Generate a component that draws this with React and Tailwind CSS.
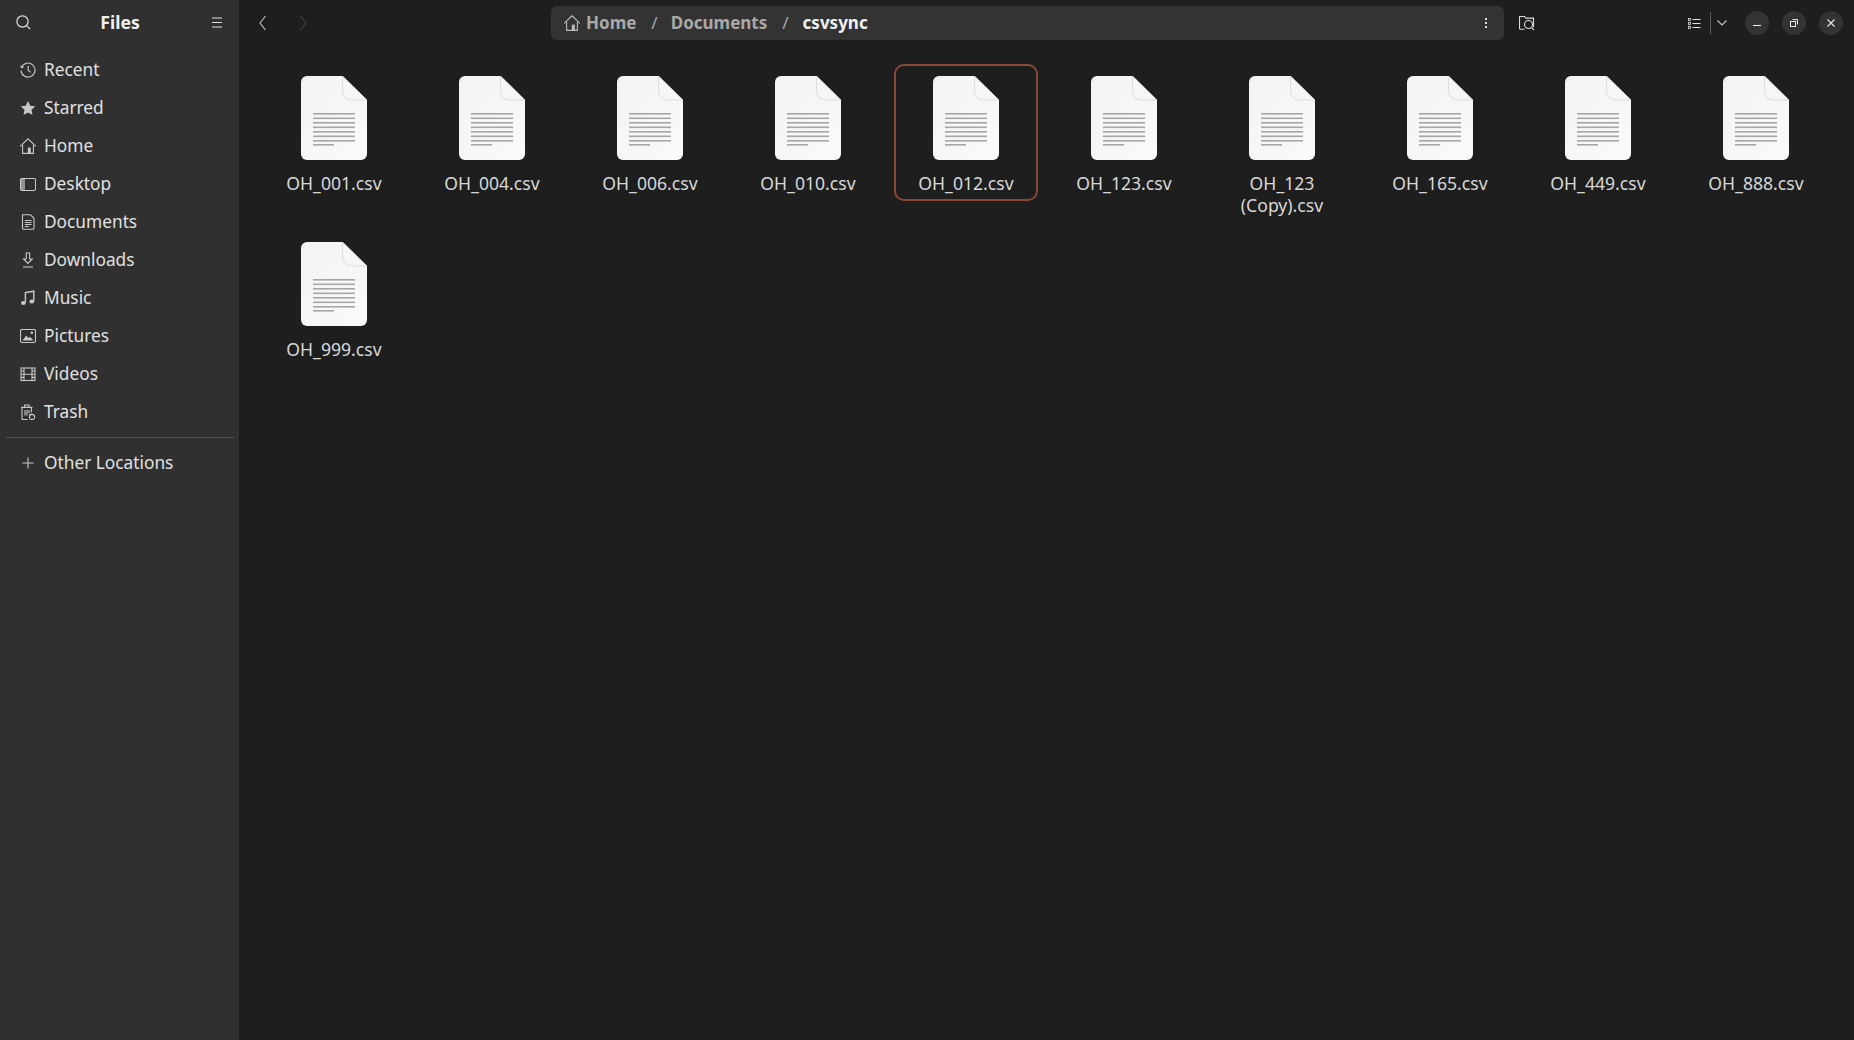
import React from "react";

const places = [
  { name: "Recent", icon: "recent" },
  { name: "Starred", icon: "star" },
  { name: "Home", icon: "home" },
  { name: "Desktop", icon: "desktop" },
  { name: "Documents", icon: "doc" },
  { name: "Downloads", icon: "download" },
  { name: "Music", icon: "music" },
  { name: "Pictures", icon: "pictures" },
  { name: "Videos", icon: "videos" },
  { name: "Trash", icon: "trash" },
];

const files = [
  "OH_001.csv",
  "OH_004.csv",
  "OH_006.csv",
  "OH_010.csv",
  "OH_012.csv",
  "OH_123.csv",
  "OH_123 (Copy).csv",
  "OH_165.csv",
  "OH_449.csv",
  "OH_888.csv",
  "OH_999.csv",
];

const PlaceIcon = ({ type }) => {
  const stroke = { fill: "none", stroke: "currentColor", strokeWidth: 1.1 };
  return (
    <svg width="16" height="16" viewBox="0 0 16 16" className="shrink-0 text-[#c8c8c8]">
      {type === "recent" && (
        <g {...stroke}>
          <path d="M1.6 5.2A7 7 0 1 1 1 8.4" />
          <path d="M8.2 4v4.4l2.6 2" />
          <path d="M.6 3.4l1 2.2 2.2-.7" />
        </g>
      )}
      {type === "star" && (
        <path fill="currentColor" d="M8 1l2.2 4.7 5.1.6-3.8 3.5 1 5.1L8 12.4l-4.5 2.5 1-5.1L.7 6.3l5.1-.6z" />
      )}
      {type === "home" && (
        <g {...stroke}>
          <path d="M0 8.400L8 .8l8 7.600" />
          <path d="M2.600 7v8.400h10.800V7" />
          <rect x="7.800" y="9.600" width="3" height="5.800" fill="currentColor" stroke="none" />
        </g>
      )}
      {type === "desktop" && (
        <g>
          <rect x=".5" y="2.500" width="15" height="12" rx="1.500" {...stroke} />
          <path fill="currentColor" opacity=".65" d="M2 2.500h3v12H2a1.500 1.500 0 0 1-1.500-1.500V4A1.500 1.500 0 0 1 2 2.500z" />
        </g>
      )}
      {type === "doc" && (
        <g {...stroke}>
          <path d="M2.500.8h8l3.500 3.500v9.700a1.300 1.300 0 0 1-1.300 1.300H3.800A1.300 1.300 0 0 1 2.500 14z" />
          <path d="M4.800 6.500h6.800M4.800 8.500h6.800M4.800 10.500h6.800M4.800 12.500h4" />
        </g>
      )}
      {type === "download" && (
        <g {...stroke}>
          <path d="M6.200 1h3.400v6h2.600L7.900 11.400 3.600 7h2.600z" />
          <path d="M3 15h10" />
        </g>
      )}
      {type === "music" && (
        <g>
          <path {...stroke} strokeWidth="1.400" d="M5.400 12.500V2.600l8.400-1.400v9.600" />
          <ellipse cx="3.400" cy="13" rx="2.400" ry="2" fill="currentColor" />
          <ellipse cx="11.800" cy="11.400" rx="2.400" ry="2" fill="currentColor" />
        </g>
      )}
      {type === "pictures" && (
        <g>
          <rect x=".5" y="1.500" width="15" height="13" rx="1.500" {...stroke} />
          <path fill="currentColor" d="M2.500 12.500l3.800-5 2.200 2.600 1.400-1.400 3.600 3.800z" />
          <circle cx="11.800" cy="4.800" r="1.300" fill="currentColor" />
        </g>
      )}
      {type === "videos" && (
        <g {...stroke}>
          <rect x="1" y="2" width="14" height="12.500" />
          <path d="M4 2v12.500M12 2v12.500M4 8.200h8M1 5h3M1 8.200h3M1 11.400h3M12 5h3M12 8.200h3M12 11.400h3" />
        </g>
      )}
      {type === "trash" && (
        <g {...stroke}>
          <path d="M1 3.400h11.400M4.600 3.200V1h4.400v2.200" />
          <path d="M2 3.600v11a1 1 0 0 0 1 1h4.600" />
          <path d="M11.400 3.600v5M5 6v5.500M7 6v5.500M9 6v3" />
          <circle cx="12" cy="13" r="2.600" />
          <path d="M9.600 9.800l1.200 1.200" />
        </g>
      )}
    </svg>
  );
};

const FileIcon = () => (
  <svg width="66" height="84" viewBox="0 0 66 84" className="shrink-0">
    <defs>
      <linearGradient id="page" x1="0" y1="0" x2="1" y2="1">
        <stop offset="0" stopColor="#f3f3f3" />
        <stop offset="1" stopColor="#fafafa" />
      </linearGradient>
    </defs>
    <path fill="url(#page)" d="M6 0h35.500L66 24v54a6 6 0 0 1-6 6H6a6 6 0 0 1-6-6V6a6 6 0 0 1 6-6z" />
    <path fill="#f7f6f4" stroke="#cfcdca" strokeWidth=".6" d="M41.500 0v15a9 9 0 0 0 9 9H66z" />
    {[37, 41.5, 46, 50.5, 55, 59.5, 64].map((y) => (
      <rect key={y} x="12" y={y} width="42" height="1.600" fill="#a6a6a6" />
    ))}
    <rect x="12" y="68" width="21" height="1.600" fill="#a6a6a6" />
  </svg>
);

const FileItem = ({ name, selected }) => (
  <div
    className={`w-[144px] self-start flex flex-col items-center pt-[10px] pb-[5px] rounded-[10px] border-2 ${
      selected ? "border-[#8a4a33]" : "border-transparent"
    }`}
  >
    <FileIcon />
    <div className="mt-3 w-full text-center text-[17.6px] leading-[22px] text-[#d8d8d8]">{name}</div>
  </div>
);

const Sidebar = () => (
  <aside className="w-[239px] shrink-0 bg-[#303030] text-[#e0e0e0]">
    <div className="h-[45px] flex items-center justify-between pl-4 pr-4">
      <svg width="15" height="15" viewBox="0 0 15 15" fill="none" stroke="#e0e0e0" strokeWidth="1.2">
        <circle cx="6.500" cy="6.500" r="5.600" />
        <path d="M10.600 10.600l3.600 3.400" />
      </svg>
      <span className="text-[17.6px] font-bold text-[#f0f0f0] -ml-[2px]">Files</span>
      <svg width="12" height="11" viewBox="0 0 12 11" stroke="#e0e0e0" strokeWidth="1.100">
        <path d="M1 1h10M1 5.500h10M1 10h10" />
      </svg>
    </div>
    <nav className="mt-[6px]">
      {places.map((p) => (
        <div key={p.name} className="h-[38px] flex items-center gap-2 pl-5">
          <PlaceIcon type={p.icon} />
          <span className="text-[17.3px]">{p.name}</span>
        </div>
      ))}
    </nav>
    <div className="ml-[6px] mr-[5px] mt-[6px] h-px bg-[#545454]" />
    <div className="mt-[6px] h-[38px] flex items-center gap-2 pl-5">
      <svg width="16" height="16" viewBox="0 0 16 16" stroke="#c8c8c8" strokeWidth="1.100">
        <path d="M2.500 8h11M8 2.500v11" />
      </svg>
      <span className="text-[17.3px]">Other Locations</span>
    </div>
  </aside>
);

const WindowButton = ({ children }) => (
  <button className="w-6 h-6 rounded-full bg-[#333333] flex items-center justify-center">{children}</button>
);

const Toolbar = () => (
  <header className="h-[46px] flex items-center">
    <div className="w-[312px] shrink-0 flex items-center pl-[20px] gap-[32px]">
      <svg width="8" height="16" viewBox="0 0 8 16" fill="none" stroke="#c4c4c4" strokeWidth="1.100">
        <path d="M6.500 1L1 8l5.500 7" />
      </svg>
      <svg width="8" height="16" viewBox="0 0 8 16" fill="none" stroke="#444444" strokeWidth="1.100">
        <path d="M1.500 1L7 8l-5.500 7" />
      </svg>
    </div>
    <div className="w-[953px] h-[34px] shrink-0 rounded-[6px] bg-[#333333] flex items-center pl-[13px] pr-4">
      <svg width="16" height="16" viewBox="0 0 16 16" fill="none" stroke="#bdbdbd" strokeWidth="1.100" className="shrink-0">
        <path d="M0 8.400L8 .8l8 7.600" />
        <path d="M2.600 7v8.400h10.800V7" />
        <rect x="7.800" y="9.600" width="3" height="5.800" fill="#bdbdbd" stroke="none" />
      </svg>
      <span className="ml-[6px] text-[17px] font-bold text-[#a9a9a9]">Home</span>
      <span className="ml-[15px] text-[17px] text-[#a9a9a9]">/</span>
      <span className="ml-[13px] text-[17px] font-bold text-[#a9a9a9]">Documents</span>
      <span className="ml-[15px] text-[17px] text-[#a9a9a9]">/</span>
      <span className="ml-[14px] text-[17px] font-bold text-[#f0f0f0]">csvsync</span>
      <svg width="4" height="12" viewBox="0 0 4 12" fill="#dedede" className="ml-auto">
        <rect x="1" y="1" width="2" height="2" />
        <rect x="1" y="5" width="2" height="2" />
        <rect x="1" y="9" width="2" height="2" />
      </svg>
    </div>
    <svg width="16" height="16" viewBox="0 0 16 16" fill="none" stroke="#dedede" strokeWidth="1.100" className="ml-[15px] shrink-0">
      <path d="M5.600 14.200H1.500a1 1 0 0 1-1-1V1.500h5l1.400 1.600h7.600v9" />
      <circle cx="9.500" cy="9.500" r="4" />
      <path d="M12.400 12.400L15 15" />
    </svg>
    <div className="ml-auto flex items-center">
      <svg width="13" height="11" viewBox="0 0 13 11" fill="#e0e0e0">
        <rect x=".5" y=".5" width="2" height="2" fill="none" stroke="#e0e0e0" strokeWidth=".8" />
        <rect x=".5" y="4.500" width="2" height="2" fill="none" stroke="#e0e0e0" strokeWidth=".8" />
        <rect x=".5" y="8.500" width="2" height="2" fill="none" stroke="#e0e0e0" strokeWidth=".8" />
        <rect x="4.500" y="1" width="8" height="1" />
        <rect x="4.500" y="5" width="8" height="1" />
        <rect x="4.500" y="9" width="8" height="1" />
      </svg>
      <div className="ml-[9px] w-px h-[22px] bg-[#5a5a5a]" />
      <svg width="10" height="6" viewBox="0 0 10 6" fill="none" stroke="#c8c8c8" strokeWidth="1.100" className="ml-[6px]">
        <path d="M.5.5L5 5 9.500.5" />
      </svg>
      <div className="ml-[18px] mr-[11px] flex items-center gap-[13px]">
        <WindowButton>
          <svg width="8" height="8" viewBox="0 0 8 8" stroke="#e8e8e8" strokeWidth="1.100">
            <path d="M0 6.500h8" />
          </svg>
        </WindowButton>
        <WindowButton>
          <svg width="8" height="8" viewBox="0 0 8 8" fill="none" stroke="#e8e8e8" strokeWidth="1">
            <rect x=".5" y="2.500" width="5" height="5" />
            <path d="M2.500.5h5v5" />
          </svg>
        </WindowButton>
        <WindowButton>
          <svg width="8" height="8" viewBox="0 0 8 8" stroke="#e8e8e8" strokeWidth="1.100">
            <path d="M.5.5l7 7M7.500.5l-7 7" />
          </svg>
        </WindowButton>
      </div>
    </div>
  </header>
);

export default function App() {
  return (
    <div className="w-[1854px] h-[1040px] flex overflow-hidden bg-[#1e1e1e] font-['Noto_Sans',sans-serif]">
      <Sidebar />
      <main className="flex-1 min-w-0">
        <Toolbar />
        <div className="mt-[18px] pl-[23px] grid grid-cols-[repeat(10,143px)] gap-x-[15px] gap-y-[7px]">
          {files.map((f) => (
            <FileItem key={f} name={f} selected={f === "OH_012.csv"} />
          ))}
        </div>
      </main>
    </div>
  );
}
